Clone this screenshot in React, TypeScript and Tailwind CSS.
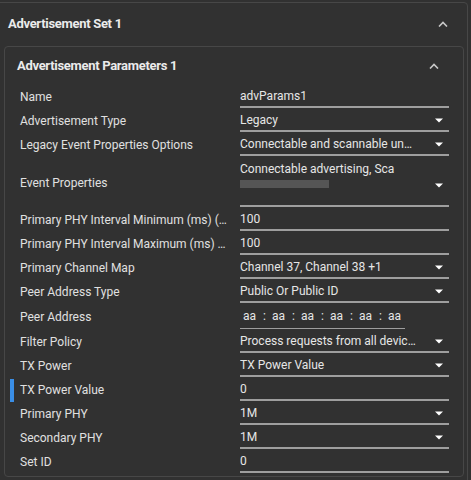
import React from 'react';

type Row = {
    label: string;
    value?: string;
    kind: 'input' | 'select' | 'multi' | 'address';
    active?: boolean;
};

const rows: Row[] = [
    { label: 'Name', value: 'advParams1', kind: 'input' },
    { label: 'Advertisement Type', value: 'Legacy', kind: 'select' },
    { label: 'Legacy Event Properties Options', value: 'Connectable and scannable undirected', kind: 'select' },
    { label: 'Event Properties', value: 'Connectable advertising, Sca', kind: 'multi' },
    { label: 'Primary PHY Interval Minimum (ms) (Range: 20 - 10485759)', value: '100', kind: 'input' },
    { label: 'Primary PHY Interval Maximum (ms) (Range: 20 - 10485759)', value: '100', kind: 'input' },
    { label: 'Primary Channel Map', value: 'Channel 37, Channel 38 +1', kind: 'select' },
    { label: 'Peer Address Type', value: 'Public Or Public ID', kind: 'select' },
    { label: 'Peer Address', kind: 'address' },
    { label: 'Filter Policy', value: 'Process requests from all devices', kind: 'select' },
    { label: 'TX Power', value: 'TX Power Value', kind: 'select' },
    { label: 'TX Power Value', value: '0', kind: 'input', active: true },
    { label: 'Primary PHY', value: '1M', kind: 'select' },
    { label: 'Secondary PHY', value: '1M', kind: 'select' },
    { label: 'Set ID', value: '0', kind: 'input' },
];

function Caret() {
    return (
        <svg width="8" height="5" viewBox="0 0 8 5" className="shrink-0">
            <path d="M0 0.5h8L4 4.5z" fill="#ffffff" />
        </svg>
    );
}

function ChevronUp() {
    return (
        <svg width="10" height="6" viewBox="0 0 10 6" className="shrink-0">
            <path d="M1 5.5L5 1.5l4 4" fill="none" stroke="#c8c8c8" strokeWidth="1.6" />
        </svg>
    );
}

function Field({ row }: { row: Row }) {
    if (row.kind === 'address') {
        return (
            <div className="flex h-[24px] w-[165px] items-end border-b border-[#9e9e9e] pb-[3px] pl-[3px] text-[12px] text-[#e6e6e6]">
                {['aa', 'aa', 'aa', 'aa', 'aa', 'aa'].map((p, i) => (
                    <React.Fragment key={i}>
                        {i > 0 && <span className="w-[15px] text-center">:</span>}
                        <span className="w-[14px]">{p}</span>
                    </React.Fragment>
                ))}
            </div>
        );
    }
    if (row.kind === 'multi') {
        return (
            <div className="flex h-[49px] items-start border-b-2 border-[#9e9e9e] pr-[6px] pt-[3px]">
                <div className="flex min-w-0 flex-1 flex-col gap-[3px]">
                    <span className="truncate text-[12px] leading-[16px] text-[#e6e6e6]">{row.value}</span>
                    <div className="h-[8px] w-[89px] bg-[#555555]" />
                </div>
                <div className="mt-[22px]">
                    <Caret />
                </div>
            </div>
        );
    }
    return (
        <div className="flex h-[22px] items-end border-b-2 border-[#9e9e9e] pb-[2px] pr-[6px]">
            <span
                className={
                    row.kind === 'select'
                        ? 'min-w-0 max-w-[176px] flex-1 truncate text-[12px] leading-[16px] text-[#e6e6e6]'
                        : 'min-w-0 flex-1 truncate text-[12px] leading-[16px] text-[#e6e6e6]'
                }
            >
                {row.value}
            </span>
            {row.kind === 'select' && (
                <div className="mb-[5px] ml-auto">
                    <Caret />
                </div>
            )}
        </div>
    );
}

export default function App() {
    return (
        <div className="h-[480px] w-[471px] overflow-hidden bg-[#313131] font-['Roboto',sans-serif]">
            <div className="ml-[-4px] mr-[3px] mt-[2px] h-[490px] rounded-tr-[4px] border border-[#474747] bg-[#313131]">
                {/* Outer header */}
                <div className="flex h-[43px] items-center pb-[1px] pl-[11px] pr-[19px]">
                    <span className="flex-1 text-[13px] font-bold tracking-[-0.3px] text-[#ebebeb]">Advertisement Set 1</span>
                    <ChevronUp />
                </div>

                {/* Inner panel */}
                <div className="ml-[7px] mr-[3px] rounded-[4px] border border-[#474747] bg-[#313131] pb-[2px]">
                    <div className="flex h-[38px] items-center pl-[12px] pr-[24px]">
                        <span className="flex-1 text-[13px] font-bold tracking-[-0.3px] text-[#ebebeb]">Advertisement Parameters 1</span>
                        <ChevronUp />
                    </div>
                    <div className="flex flex-col pr-[14px]">
                        {rows.map((row) => (
                            <div key={row.label} className="relative flex items-center">
                                {row.active && <div className="absolute left-[5px] top-[1px] h-[23px] w-[4px] bg-[#3a8ee6]" />}
                                <div className="w-[235px] shrink-0 truncate pl-[15px] pr-[12px] text-[12px] text-[#e0e0e0]">
                                    {row.label}
                                </div>
                                <div className="min-w-0 flex-1 py-[1px]">
                                    <Field row={row} />
                                </div>
                            </div>
                        ))}
                    </div>
                </div>
            </div>
        </div>
    );
}
